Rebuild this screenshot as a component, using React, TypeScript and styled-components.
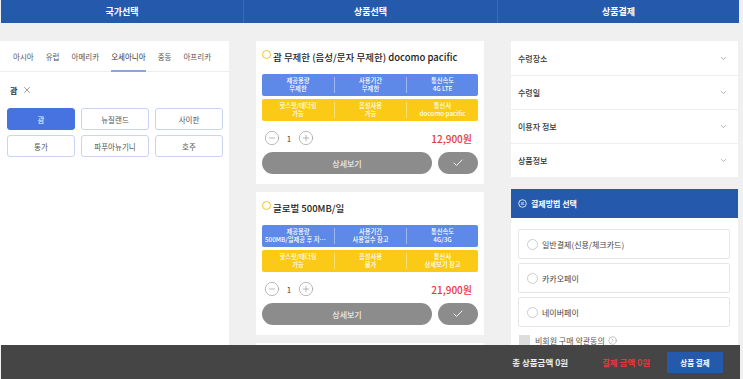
import React from "react";
import styled, { createGlobalStyle } from "styled-components";
import { Check, ChevronDown, CircleMinus, CirclePlus, CircleChevronRight, X } from "lucide-react";

const GlobalStyle = createGlobalStyle`
  html, body {
    margin: 0;
    padding: 0;
    background: #f0f0f0;
    font-family: "Noto Sans CJK KR", "Noto Sans", sans-serif;
  }
  * { box-sizing: border-box; }
`

const Page = styled.div`
  height: 379px;
  display: flex;
  flex-direction: column;
  overflow: hidden;
`
const TopBar = styled.div`
  height: 23px;
  margin: 0 4px 0 1px;
  background: #2559ab;
  display: grid;
  grid-template-columns: 242px 254px 1fr;
  >div{
    display: flex;
    align-items: center;
    justify-content: center;
    color: #fff;
    font-size: 9px;
    font-weight: 700;
    & + div{
      border-left: 1px solid #3b6bb8;
    }
  }
`
const Main = styled.div`
  flex: 1;
  min-height: 0;
  display: grid;
  grid-template-columns: 229px 268px 1fr;
  padding-top: 18px;
  overflow: hidden;
`
const LeftPanel = styled.section`
  background: #fff;
`
const Tabs = styled.ul`
  list-style: none;
  margin: 0;
  padding: 0 0 0 13px;
  height: 31px;
  display: flex;
  gap: 12px;
  border-bottom: 1px solid #eee;
`
const Tab = styled.li<{ $active?: boolean }>`
  display: flex;
  align-items: center;
  font-size: 7.5px;
  color: ${p => p.$active ? "#333" : "#555"};
  position: relative;
  padding-top: 1px;
  ${p => p.$active && `
    &::after{
      content: '';
      position: absolute;
      left: 0;
      right: 0;
      bottom: -1px;
      height: 2px;
      background: #8ca6dc;
    }
  `}
`
const Chosen = styled.div`
  margin: 11px 0 0 10px;
  height: 14px;
  display: flex;
  align-items: center;
  gap: 5px;
  font-size: 8px;
  font-weight: 700;
  color: #333;
  >svg{ color: #555; }
`
const CountryGrid = styled.div`
  margin-top: 11px;
  padding: 0 7px;
  display: grid;
  grid-template-columns: repeat(3, 68px);
  gap: 5px 6px;
`
const CountryButton = styled.button<{ $selected?: boolean }>`
  height: 22px;
  border-radius: 3px;
  border: 1px solid ${p => p.$selected ? "#4673e0" : "#c9d4f2"};
  background: ${p => p.$selected ? "#4673e0" : "#fff"};
  color: ${p => p.$selected ? "#fff" : "#555"};
  font-family: inherit;
  font-size: 7.5px;
  padding: 0;
`
const MiddleColumn = styled.section`
  padding: 0 13px 0 27px;
  display: flex;
  flex-direction: column;
  gap: 8px;
`
const Card = styled.article`
  background: #fff;
  padding: 6px 6px 10px;
  flex-shrink: 0;
`
const NextCard = styled(Card)`
  height: 60px;
`
const Title = styled.h3`
  margin: 0 0 7px;
  height: 20px;
  display: flex;
  align-items: center;
  font-size: 9.5px;
  font-weight: 500;
  color: #222;
  position: relative;
  padding-left: 11px;
  &::before{
    content: '';
    position: absolute;
    left: 0;
    top: 3px;
    width: 7px;
    height: 7px;
    border: 1.5px solid #f7c31a;
    border-radius: 50%;
  }
`
const InfoBox = styled.div<{ $tone: "blue" | "yellow" }>`
  height: 22px;
  border-radius: 2px;
  background: ${p => p.$tone === "blue" ? "#5e89e8" : "#fbca16"};
  display: grid;
  grid-template-columns: repeat(3, 1fr);
  align-items: center;
  & + &{ margin-top: 3px; }
`
const InfoCell = styled.div`
  text-align: center;
  color: #fff;
  font-size: 6.3px;
  line-height: 8px;
  font-weight: 500;
  white-space: nowrap;
  overflow: hidden;
  text-overflow: ellipsis;
  padding: 0 3px;
  & + &{ border-left: 1px solid rgba(255,255,255,0.4); }
`
const StepRow = styled.div`
  margin-top: 8px;
  height: 18px;
  display: flex;
  align-items: center;
  padding-left: 2px;
  color: #999;
  >span{
    width: 18px;
    text-align: center;
    font-size: 8px;
    color: #444;
  }
`
const Price = styled.div`
  margin-left: auto;
  margin-right: 6px;
  font-size: 10px;
  font-weight: 500;
  color: #e5393c;
`
const ButtonRow = styled.div`
  margin-top: 5px;
  display: flex;
  gap: 6px;
`
const GrayButton = styled.button<{ $narrow?: boolean }>`
  height: 22px;
  border: none;
  border-radius: 11px;
  background: #8c8c8c;
  color: #fff;
  font-family: inherit;
  font-size: 8px;
  display: flex;
  align-items: center;
  justify-content: center;
  flex: ${p => p.$narrow ? "0 0 40px" : "1"};
  padding: 0;
`
const RightColumn = styled.section`
  padding: 0 5px 0 14px;
`
const Accordion = styled.ul`
  list-style: none;
  margin: 0;
  padding: 0;
  background: #fff;
  >li{
    height: 34px;
    display: flex;
    align-items: center;
    justify-content: space-between;
    padding: 0 10px 0 7px;
    font-size: 8px;
    font-weight: 500;
    color: #333;
    & + li{ border-top: 1px solid #eee; }
    >svg{ color: #999; }
  }
`
const PayBlock = styled.div`
  margin-top: 12px;
  background: #fff;
  height: 200px;
`
const PayHeader = styled.div`
  height: 29px;
  background: #2559ab;
  display: flex;
  align-items: center;
  gap: 4px;
  padding-left: 7px;
  color: #fff;
  font-size: 8px;
  font-weight: 700;
`
const PayBody = styled.div`
  padding: 11px 8px 0 7px;
  display: flex;
  flex-direction: column;
  gap: 4px;
`
const Option = styled.label`
  height: 30px;
  border: 1px solid #e6e6e6;
  border-radius: 2px;
  display: flex;
  align-items: center;
  padding-left: 8px;
  gap: 4px;
  font-size: 8px;
  color: #444;
  >i{
    width: 11px;
    height: 11px;
    border: 1px solid #ccc;
    border-radius: 50%;
  }
`
const Agree = styled.div`
  margin-top: 4px;
  display: flex;
  align-items: center;
  gap: 5px;
  padding-left: 1px;
  font-size: 8px;
  color: #555;
  >i{
    width: 11px;
    height: 11px;
    background: #ddd;
  }
  >svg{ color: #888; margin-left: -2px; }
`
const BottomBar = styled.footer`
  height: 34px;
  margin: 0 3px 0 1px;
  background: #454545;
  display: flex;
  align-items: center;
  justify-content: flex-end;
  padding-right: 17px;
  font-size: 8.5px;
  font-weight: 700;
  >.total{ color: #eee; margin-right: 34px; }
  >.pay{ color: #e8383d; margin-right: 17px; }
  >button{
    width: 56px;
    height: 21px;
    border: none;
    background: #2559ab;
    color: #fff;
    font-family: inherit;
    font-size: 7.5px;
    font-weight: 700;
    padding: 0;
  }
`

type Product = {
    title: string
    blue: [string, string][]
    yellow: [string, string][]
    price: string
}

const products: Product[] = [
    {
        title: "괌 무제한 (음성/문자 무제한) docomo pacific",
        blue: [["제공용량", "무제한"], ["사용기간", "무제한"], ["통신속도", "4G LTE"]],
        yellow: [["핫스팟/테더링", "가능"], ["음성사용", "가능"], ["통신사", "docomo pacific"]],
        price: "12,900원",
    },
    {
        title: "글로벌 500MB/일",
        blue: [["제공용량", "500MB/일제공 후 저속 무제한"], ["사용기간", "사용일수 참고"], ["통신속도", "4G/3G"]],
        yellow: [["핫스팟/테더링", "가능"], ["음성사용", "불가"], ["통신사", "상세보기 참고"]],
        price: "21,900원",
    },
]

function ProductCard({ p }: { p: Product }) {
    return (
        <Card>
            <Title>{p.title}</Title>
            <InfoBox $tone="blue">
                {p.blue.map(([k, v]) => <InfoCell key={k}>{k}<br/>{v}</InfoCell>)}
            </InfoBox>
            <InfoBox $tone="yellow">
                {p.yellow.map(([k, v]) => <InfoCell key={k}>{k}<br/>{v}</InfoCell>)}
            </InfoBox>
            <StepRow>
                <CircleMinus size={16} strokeWidth={1}/>
                <span>1</span>
                <CirclePlus size={16} strokeWidth={1}/>
                <Price>{p.price}</Price>
            </StepRow>
            <ButtonRow>
                <GrayButton>상세보기</GrayButton>
                <GrayButton $narrow><Check size={12} strokeWidth={1.8}/></GrayButton>
            </ButtonRow>
        </Card>
    )
}

function App() {
    return (
        <Page>
            <GlobalStyle/>
            <TopBar>
                <div>국가선택</div>
                <div>상품선택</div>
                <div>상품결제</div>
            </TopBar>
            <Main>
                <LeftPanel>
                    <Tabs>
                        <Tab>아시아</Tab>
                        <Tab>유럽</Tab>
                        <Tab>아메리카</Tab>
                        <Tab $active>오세아니아</Tab>
                        <Tab>중동</Tab>
                        <Tab>아프리카</Tab>
                    </Tabs>
                    <Chosen>괌 <X size={10} strokeWidth={1.4}/></Chosen>
                    <CountryGrid>
                        <CountryButton $selected>괌</CountryButton>
                        <CountryButton>뉴질랜드</CountryButton>
                        <CountryButton>사이판</CountryButton>
                        <CountryButton>통가</CountryButton>
                        <CountryButton>파푸아뉴기니</CountryButton>
                        <CountryButton>호주</CountryButton>
                    </CountryGrid>
                </LeftPanel>
                <MiddleColumn>
                    {products.map(p => <ProductCard key={p.title} p={p}/>)}
                    <NextCard/>
                </MiddleColumn>
                <RightColumn>
                    <Accordion>
                        <li>수령장소 <ChevronDown size={9}/></li>
                        <li>수령일 <ChevronDown size={9}/></li>
                        <li>이용자 정보 <ChevronDown size={9}/></li>
                        <li>상품정보 <ChevronDown size={9}/></li>
                    </Accordion>
                    <PayBlock>
                        <PayHeader>
                            <svg width="9" height="9" viewBox="0 0 10 10">
                                <circle cx="5" cy="5" r="4.2" fill="none" stroke="#fff" strokeWidth="0.9"/>
                                <path d="M3.2 4.3h3.6M3.2 5.8h3.6" stroke="#fff" strokeWidth="0.8"/>
                            </svg>
                            결제방법 선택
                        </PayHeader>
                        <PayBody>
                            <Option><i/>일반결제(신용/체크카드)</Option>
                            <Option><i/>카카오페이</Option>
                            <Option><i/>네이버페이</Option>
                            <Agree><i/>비회원 구매 약관동의 <CircleChevronRight size={9} strokeWidth={1.3}/></Agree>
                        </PayBody>
                    </PayBlock>
                </RightColumn>
            </Main>
            <BottomBar>
                <span className="total">총 상품금액 0원</span>
                <span className="pay">결제 금액 0원</span>
                <button>상품 결제</button>
            </BottomBar>
        </Page>
    )
}
export default App
